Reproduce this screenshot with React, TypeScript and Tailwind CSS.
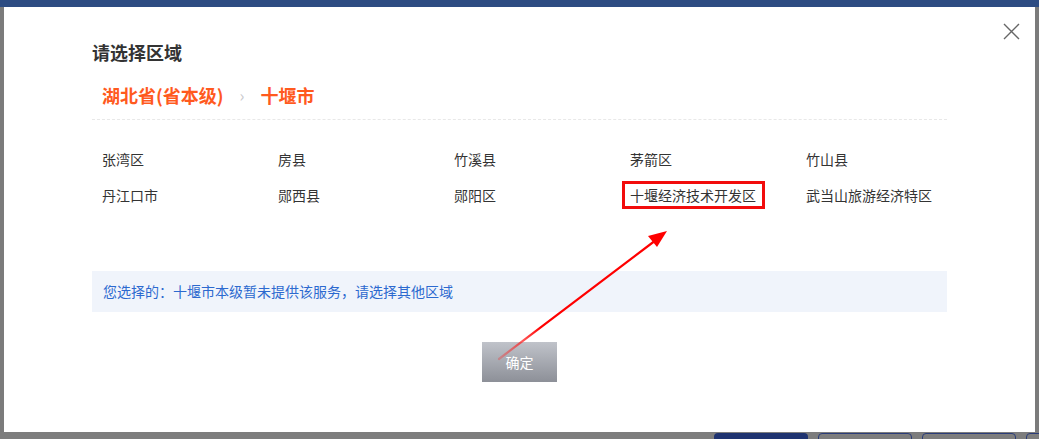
const counties = [
  "张湾区",
  "房县",
  "竹溪县",
  "茅箭区",
  "竹山县",
  "丹江口市",
  "郧西县",
  "郧阳区",
  "十堰经济技术开发区",
  "武当山旅游经济特区",
];

const App = () => {
  return (
    <div
      className="relative w-[1039px] h-[439px] overflow-hidden bg-[#7b7b7b] flex flex-col"
      style={{ fontFamily: '"Noto Sans CJK SC", "Noto Sans", sans-serif' }}
    >
      {/* dimmed page behind */}
      <div className="h-[7px] shrink-0 bg-[#2d4c82]" />

      <div className="flex-1 px-[4px]">
        {/* modal */}
        <div className="relative h-[425px] bg-white px-[88px]">
          <button className="absolute right-[15px] top-[16px] text-[#666]" aria-label="close">
            <svg width="17" height="17" viewBox="0 0 17 17" fill="none" stroke="currentColor" strokeWidth="1.4">
              <path d="M1 1L16 16M16 1L1 16" />
            </svg>
          </button>

          <h2 className="pt-[33px] h-[57px] text-[18px] leading-[24px] font-bold text-[#333]">请选择区域</h2>

          <div className="mt-[19px] pb-[12px] border-b border-dashed border-[#e8e8e8] flex items-center pl-[10px] text-[18px] leading-[24px] font-bold text-[#ff5a1e]">
            <span>湖北省(省本级)</span>
            <span className="mx-[16px] text-[#c8c8cc] font-normal text-[16px]">›</span>
            <span>十堰市</span>
          </div>

          <div className="mt-[21px] grid grid-cols-[repeat(5,176px)] text-[14px] text-[#333]">
            {counties.map((c) => (
              <div key={c} className="h-[36px] flex items-center pl-[10px] leading-[20px]">
                {c === "十堰经济技术开发区" ? (
                  <span className="relative">
                    <span className="absolute -left-[8px] -right-[9px] -top-[4px] -bottom-[4px] border-[3px] border-[#f20c0c]" />
                    {c}
                  </span>
                ) : (
                  <span>{c}</span>
                )}
              </div>
            ))}
          </div>

          <div className="mt-[58px] h-[41px] bg-[#f0f4fb] flex items-center pl-[11px] text-[14px] text-[#2c69cf]">
            您选择的：十堰市本级暂未提供该服务，请选择其他区域
          </div>

          <div className="mt-[30px] flex justify-center">
            <button className="w-[75px] h-[40px] bg-gradient-to-b from-[#c0c3ca] to-[#8d9098] text-white text-[14px]">
              确定
            </button>
          </div>
        </div>
      </div>

      <div className="h-[7px] shrink-0 flex gap-[10px] pl-[714px] pt-[1px] bg-[#7d7d7d]">
        <div className="w-[94px] shrink-0 h-[10px] rounded-t-[4px] bg-[#1f3370]" />
        <div className="w-[94px] shrink-0 h-[10px] rounded-t-[4px] border border-[#2a3c78]" />
        <div className="w-[94px] shrink-0 h-[10px] rounded-t-[4px] border border-[#2a3c78]" />
        <div className="w-[94px] shrink-0 h-[10px] rounded-t-[4px] border border-[#2a3c78]" />
      </div>

      {/* annotation arrow */}
      <svg className="absolute left-0 top-0 pointer-events-none" width="1039" height="439">
        <defs>
          <linearGradient id="arr" x1="500" y1="358" x2="662" y2="234" gradientUnits="userSpaceOnUse">
            <stop offset="0" stopColor="#ff2020" stopOpacity="0.3" />
            <stop offset="0.25" stopColor="#ff0000" />
            <stop offset="1" stopColor="#ff0000" />
          </linearGradient>
        </defs>
        <path d="M499 359L656 240" stroke="url(#arr)" strokeWidth="2.2" strokeLinecap="round" />
        <path d="M667 231L648 236L657 247Z" fill="#ff0000" />
      </svg>
    </div>
  );
};

export default App;
